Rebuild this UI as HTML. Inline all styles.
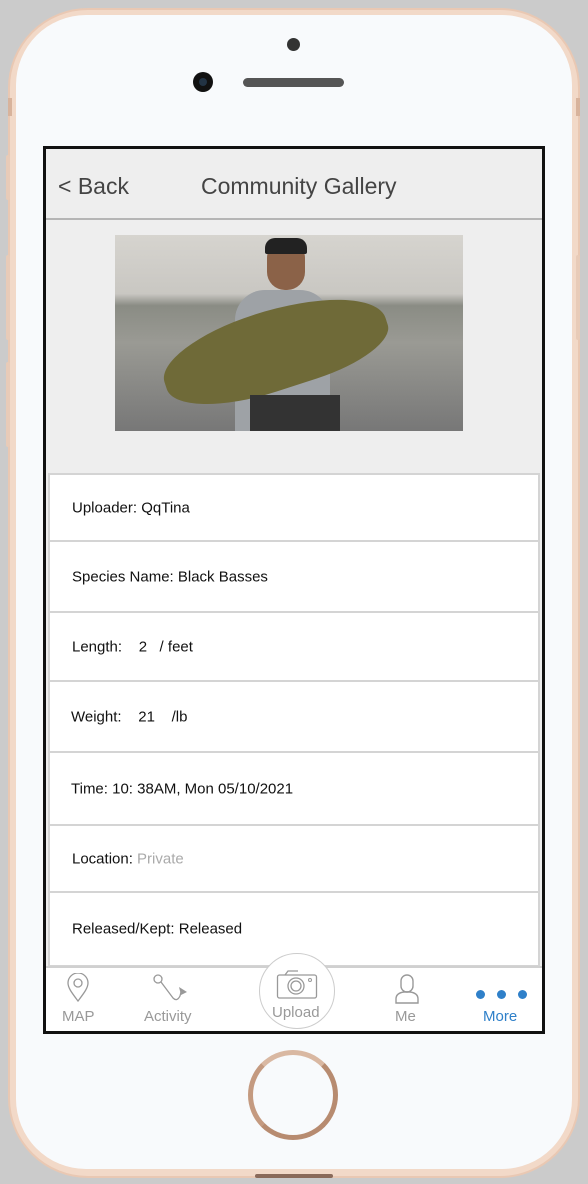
<!DOCTYPE html>
<html><head><style>
body{margin:0;width:588px;height:1184px;background:#cbcbcb;position:relative;overflow:hidden;font-family:"Liberation Sans",sans-serif}
.phone{position:absolute;left:8px;top:8px;width:572px;height:1170px;border-radius:80px;background:#f2d9c8;border:2px solid #e9c8b3;box-sizing:border-box}
.face{position:absolute;left:16px;top:15px;width:556px;height:1154px;border-radius:70px;background:#f8fafc}
.abs{position:absolute}
.screen{position:absolute;left:43px;top:146px;width:502px;height:888px;border:3px solid #111;box-sizing:border-box;background:#eee;overflow:hidden}
.hdr{position:absolute;left:0;top:0;width:496px;height:69px;border-bottom:2px solid #b5b5b5;color:#444;font-size:23px}
.row{position:absolute;left:2px;width:492px;background:#fff;border:2px solid #d4d4d4;box-sizing:border-box;font-size:15px;color:#111}
.row span{position:absolute;left:22px;top:50%;transform:translateY(-50%)}
.tab{position:absolute;top:817px;left:0;width:496px;height:66px;background:#fff;border-top:2px solid #d0d0d0}
.tl{position:absolute;font-size:15px;color:#999;top:40px}
</style></head><body>
<div class="phone"></div>
<div class="face"></div>
<div class="abs" style="left:8px;top:98px;width:4px;height:18px;background:#d8b39c"></div>
<div class="abs" style="left:6px;top:155px;width:4px;height:45px;background:#e8cbb8;border-radius:2px"></div>
<div class="abs" style="left:6px;top:255px;width:4px;height:85px;background:#e8cbb8;border-radius:2px"></div>
<div class="abs" style="left:6px;top:362px;width:4px;height:85px;background:#e8cbb8;border-radius:2px"></div>
<div class="abs" style="left:576px;top:255px;width:4px;height:85px;background:#e8cbb8;border-radius:2px"></div>
<div class="abs" style="left:576px;top:98px;width:4px;height:18px;background:#d8b39c"></div>
<div class="abs" style="left:287px;top:38px;width:13px;height:13px;border-radius:50%;background:#333"></div>
<div class="abs" style="left:193px;top:72px;width:20px;height:20px;border-radius:50%;background:#111"><div class="abs" style="left:6px;top:6px;width:8px;height:8px;border-radius:50%;background:#234"></div></div>
<div class="abs" style="left:243px;top:78px;width:101px;height:9px;border-radius:5px;background:#555"></div>
<div class="abs" style="left:248px;top:1050px;width:80px;height:80px;border-radius:50%;border:5px solid #b78b70;border-top-color:#d9b8a2;border-left-color:#c49a80"></div>
<div class="abs" style="left:255px;top:1174px;width:78px;height:4px;background:#8a6a5a;border-radius:2px"></div>
<div class="screen">
 <div class="hdr"><span class="abs" style="left:12px;top:24px">&lt; Back</span><span class="abs" style="left:155px;top:24px">Community Gallery</span></div>
 <div class="abs" style="left:69px;top:86px;width:348px;height:196px;background:linear-gradient(180deg,#d6d4cf 0%,#c9c7c2 30%,#8a8c84 36%,#9a9a94 55%,#777 100%)">
  <div class="abs" style="left:120px;top:55px;width:95px;height:141px;background:#9ea2a6;border-radius:30px 30px 0 0"></div>
  <div class="abs" style="left:152px;top:5px;width:38px;height:50px;background:#8b6248;border-radius:18px"></div>
  <div class="abs" style="left:150px;top:3px;width:42px;height:16px;background:#222;border-radius:10px 10px 2px 2px"></div>
  <div class="abs" style="left:45px;top:75px;width:230px;height:80px;background:#6f6a38;border-radius:50% 60% 40% 50%;transform:rotate(-18deg)"></div>
  <div class="abs" style="left:135px;top:160px;width:90px;height:36px;background:#333"></div>
 </div>
 <div class="row" style="top:324px;height:69px"><span>Uploader: QqTina</span></div>
 <div class="row" style="top:391px;height:73px"><span>Species Name: Black Basses</span></div>
 <div class="row" style="top:462px;height:71px"><span>Length:&nbsp;&nbsp;&nbsp;&nbsp;2&nbsp;&nbsp;&nbsp;/ feet</span></div>
 <div class="row" style="top:531px;height:73px"><span style="left:21px">Weight:&nbsp;&nbsp;&nbsp;&nbsp;21&nbsp;&nbsp;&nbsp;&nbsp;/lb</span></div>
 <div class="row" style="top:602px;height:75px"><span style="left:21px">Time: 10: 38AM, Mon 05/10/2021</span></div>
 <div class="row" style="top:675px;height:69px"><span>Location: <b style="font-weight:normal;color:#aaa">Private</b></span></div>
 <div class="row" style="top:742px;height:76px"><span>Released/Kept: Released</span></div>
 <div class="tab">
  <svg class="abs" style="left:20px;top:5px" width="24" height="30" viewBox="0 0 24 30"><path d="M12 28C6 20 2 15 2 10a10 10 0 0 1 20 0c0 5-4 10-10 18z" fill="none" stroke="#999" stroke-width="1.3"/><circle cx="12" cy="10" r="4" fill="none" stroke="#999" stroke-width="1.3"/></svg>
  <span class="tl" style="left:16px">MAP</span>
  <svg class="abs" style="left:105px;top:5px" width="40" height="32" viewBox="0 0 40 32"><circle cx="7" cy="6" r="4" fill="none" stroke="#999" stroke-width="1.3"/><path d="M10 9l12 16q4 4 7-2l1-4" fill="none" stroke="#999" stroke-width="1.3"/><path d="M28 14l8 5-6 3z" fill="#999"/></svg>
  <span class="tl" style="left:98px">Activity</span>
  <div class="abs" style="left:213px;top:-15px;width:76px;height:76px;border-radius:50%;border:1.5px solid #ccc;background:#fff;box-sizing:border-box"></div>
  <svg class="abs" style="left:230px;top:2px" width="42" height="30" viewBox="0 0 42 30"><rect x="1.5" y="5" width="39" height="23" rx="2" fill="none" stroke="#999" stroke-width="1.3"/><path d="M9 5l3-4h10" fill="none" stroke="#999" stroke-width="1.3"/><circle cx="20" cy="16" r="8" fill="none" stroke="#999" stroke-width="1.3"/><circle cx="20" cy="16" r="5" fill="none" stroke="#999" stroke-width="1.3"/><circle cx="34" cy="10" r="1.5" fill="none" stroke="#999"/></svg>
  <span class="tl" style="left:226px;top:36px">Upload</span>
  <svg class="abs" style="left:348px;top:5px" width="26" height="32" viewBox="0 0 26 32"><rect x="7" y="2" width="12" height="17" rx="6" fill="none" stroke="#999" stroke-width="1.4"/><path d="M2 30v-4q0-6 8-7h6q8 1 8 7v4z" fill="none" stroke="#999" stroke-width="1.4"/></svg>
  <span class="tl" style="left:349px">Me</span>
  <div class="abs" style="left:430px;top:22px;width:9px;height:9px;border-radius:50%;background:#2f80c9"></div>
  <div class="abs" style="left:451px;top:22px;width:9px;height:9px;border-radius:50%;background:#2f80c9"></div>
  <div class="abs" style="left:472px;top:22px;width:9px;height:9px;border-radius:50%;background:#2f80c9"></div>
  <span class="tl" style="left:437px;color:#2f80c9">More</span>
 </div>
</div>
</body></html>
